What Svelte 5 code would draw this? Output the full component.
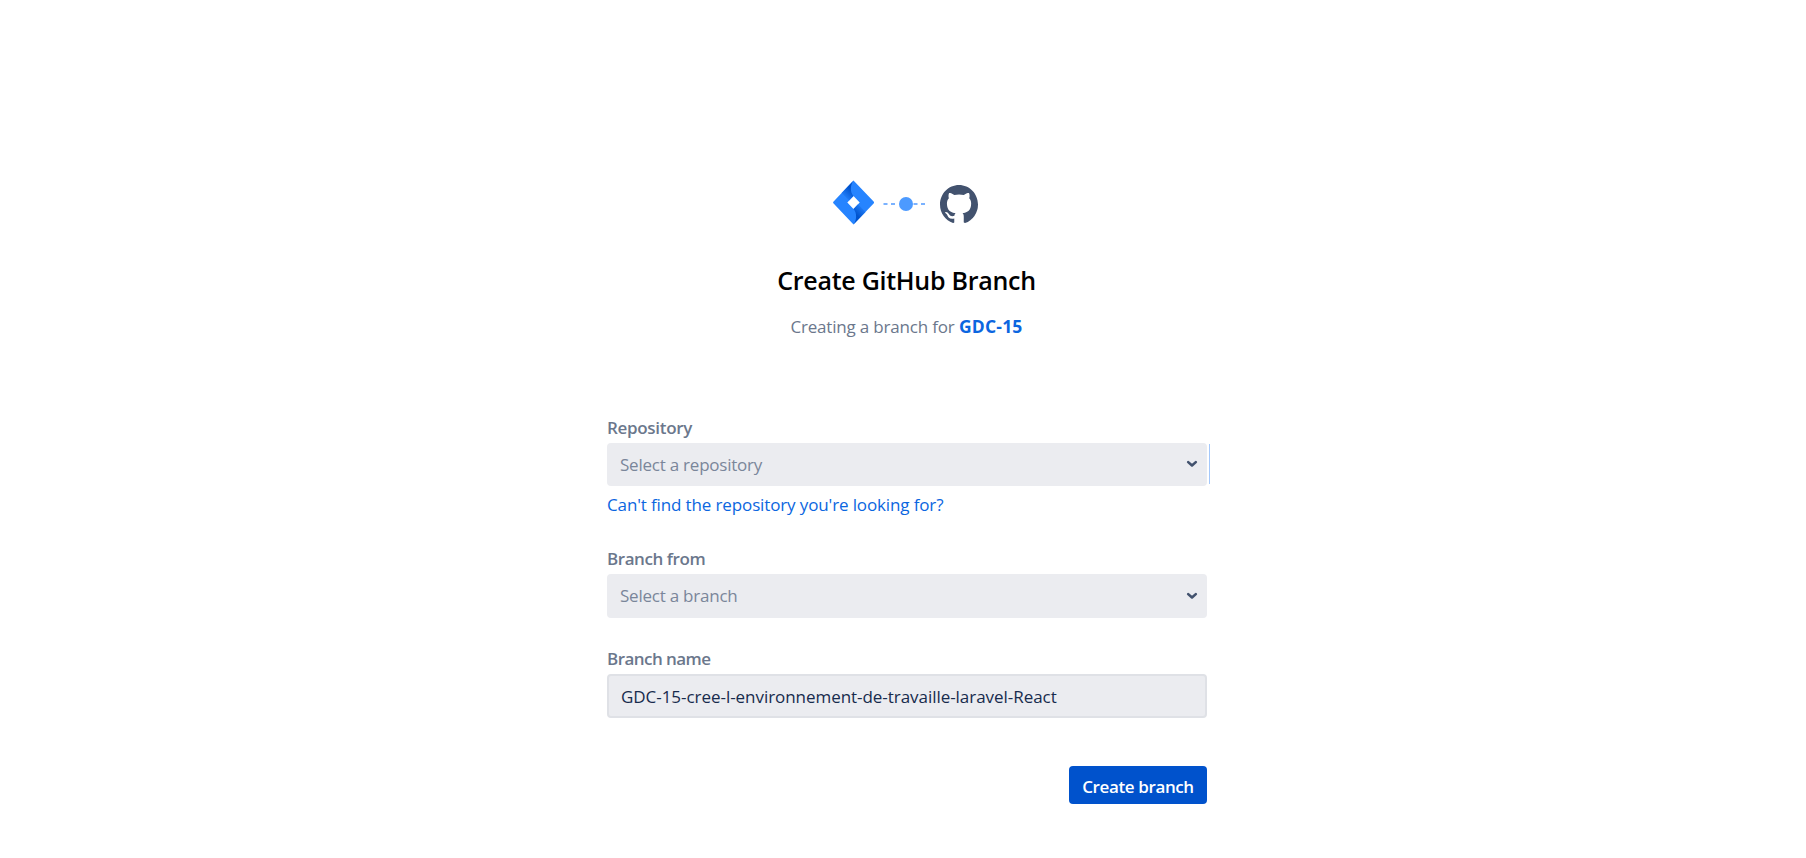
<script>
  let branchName = $state('GDC-15-cree-l-environnement-de-travaille-laravel-React');
</script>

{#snippet chevron()}
  <svg class="chevron" width="12" height="8" viewBox="0 0 12 8" aria-hidden="true">
    <path d="M2.2 2.1 6 5.5 9.8 2.1" fill="none" stroke="#42526e" stroke-width="2.6" stroke-linecap="round" stroke-linejoin="round" />
  </svg>
{/snippet}

<main>
  <header>
    <div class="logos">
      <svg width="42" height="45" viewBox="0 0 42 44" preserveAspectRatio="none" aria-hidden="true">
        <defs>
          <linearGradient id="upper" gradientUnits="userSpaceOnUse" x1="19" y1="10" x2="11" y2="18">
            <stop offset="0" stop-color="#0052cc" />
            <stop offset="1" stop-color="#2684ff" />
          </linearGradient>
          <linearGradient id="lower" gradientUnits="userSpaceOnUse" x1="23" y1="34" x2="31" y2="26">
            <stop offset="0" stop-color="#0052cc" />
            <stop offset="1" stop-color="#2684ff" />
          </linearGradient>
        </defs>
        <path fill="#2684ff" fill-rule="evenodd" d="M20.5.4 40.6 20.9a1.4 1.4 0 0 1 0 2L20.5 43.6.6 22.9a1.4 1.4 0 0 1 0-2ZM20.5 15.6 14.3 22l6.2 6.4 6.2-6.4Z" />
        <path fill="url(#upper)" d="M20.5 15.6C17 12 17 5 20.5.4L8.6 12.7 16.1 20.1Z" />
        <path fill="url(#lower)" d="M20.5 28.4C24 32 24 39 20.5 43.6L32.5 31.2 25 23.8Z" />
      </svg>
      <svg width="42" height="14" viewBox="0 0 42 14" class="link-line" aria-hidden="true">
        <path d="M.5 7h4M8 7h4M30.5 7h4M38 7h4" stroke="#7ab2ff" stroke-width="2" />
        <circle cx="23" cy="7" r="7" fill="#4c9aff" />
      </svg>
      <svg width="38" height="39" viewBox="0 0 16 16" preserveAspectRatio="none" class="github" aria-hidden="true">
        <path fill="#42526e" d="M8 0C3.58 0 0 3.58 0 8c0 3.54 2.29 6.53 5.47 7.59.4.07.55-.17.55-.38 0-.19-.01-.82-.01-1.49-2.01.37-2.53-.49-2.69-.94-.09-.23-.48-.94-.82-1.13-.28-.15-.68-.52-.01-.53.63-.01 1.08.58 1.23.82.72 1.21 1.87.87 2.33.66.07-.52.28-.87.51-1.07-1.78-.2-3.64-.89-3.64-3.95 0-.87.31-1.59.82-2.15-.08-.2-.36-1.02.08-2.12 0 0 .67-.21 2.2.82.64-.18 1.32-.27 2-.27s1.36.09 2 .27c1.53-1.04 2.2-.82 2.2-.82.44 1.1.16 1.92.08 2.12.51.56.82 1.27.82 2.15 0 3.07-1.87 3.75-3.65 3.95.29.25.54.73.54 1.48 0 1.07-.01 1.93-.01 2.2 0 .21.15.46.55.38A8.01 8.01 0 0 0 16 8c0-4.42-3.58-8-8-8Z" />
      </svg>
    </div>
    <h1>Create GitHub Branch</h1>
    <p class="subtitle"><span>Creating a branch for</span> <a href="#issue">GDC-15</a></p>
  </header>

  <form onsubmit={(e) => e.preventDefault()}>
    <div class="field">
      <div class="label repo-label">Repository</div>
      <div class="select repo">
        <span>Select a repository</span>
        {@render chevron()}
      </div>
      <a class="help" href="#help">Can't find the repository you're looking for?</a>
    </div>

    <div class="field from">
      <div class="label from-label">Branch from</div>
      <div class="select">
        <span>Select a branch</span>
        {@render chevron()}
      </div>
    </div>

    <div class="field name">
      <label class="label name-label" for="branch">Branch name</label>
      <input id="branch" bind:value={branchName} spellcheck="false" />
    </div>

    <div class="actions">
      <button type="submit">Create branch</button>
    </div>
  </form>
</main>

<style>
  :global(body) {
    background: #fff;
  }

  main {
    box-sizing: border-box;
    width: 600px;
    height: 858px;
    margin: 0 auto;
    padding: 180px 0 0;
    transform: translateX(4px);
    font: 400 17px/20px "Open Sans", "Noto Sans", sans-serif;
    color: #172b4d;
  }

  header {
    display: flex;
    flex-direction: column;
    align-items: center;
  }

  .logos {
    display: flex;
    align-items: flex-start;
    height: 44px;
    margin-right: 4px;
  }

  .logos svg {
    display: block;
  }

  .link-line {
    margin: 17px 15px 0 8px;
  }

  .github {
    margin-top: 5px;
  }

  h1 {
    margin: 41px 1px 0 0;
    font-size: 25px;
    line-height: 30px;
    font-weight: 600;
    letter-spacing: -0.27px;
    color: #000;
  }

  .subtitle {
    height: 20px;
    margin: 21px 1px 0 0;
    color: #6b778c;
    white-space: nowrap;
  }

  .subtitle span {
    letter-spacing: -0.19px;
  }

  .subtitle a {
    font-size: 17.5px;
    font-weight: 700;
    letter-spacing: 0.2px;
  }

  a {
    color: #0b66e0;
    text-decoration: none;
  }

  form {
    margin-top: 81px;
  }

  .field {
    display: flex;
    flex-direction: column;
  }

  .from {
    margin-top: 33px;
  }

  .name {
    margin-top: 30px;
  }

  .label {
    padding-top: 1px;
    margin-bottom: 5px;
    font-weight: 600;
    color: #6b778c;
  }

  .repo-label {
    letter-spacing: -0.31px;
  }

  .from-label {
    letter-spacing: -0.43px;
  }

  .name-label {
    letter-spacing: -0.55px;
  }

  .select {
    position: relative;
    display: flex;
    align-items: center;
    justify-content: space-between;
    box-sizing: border-box;
    height: 44px;
    padding: 0 9px 0 13px;
    border-radius: 4px;
    background: #ebecf0;
    color: #7a869a;
    letter-spacing: -0.23px;
  }

  .repo {
    height: 43px;
  }

  .repo::after {
    content: "";
    position: absolute;
    top: 1px;
    bottom: 2px;
    right: -3px;
    width: 1px;
    background: #a4c8fb;
  }

  .chevron {
    display: block;
    margin-top: -1px;
  }

  .help {
    margin-top: 9px;
    letter-spacing: -0.13px;
  }

  input {
    box-sizing: border-box;
    width: 100%;
    height: 44px;
    margin: 0;
    padding: 0 12px;
    border: 2px solid #dfe1e6;
    border-radius: 4px;
    outline: none;
    background: #ebecf0;
    font: inherit;
    letter-spacing: -0.045px;
    color: #172b4d;
  }

  .actions {
    display: flex;
    justify-content: flex-end;
    margin-top: 48px;
  }

  button {
    box-sizing: border-box;
    width: 138px;
    height: 38px;
    padding: 3px 0 0;
    border: 0;
    border-radius: 4px;
    background: #0052cc;
    font: inherit;
    font-weight: 600;
    letter-spacing: -0.38px;
    color: #fff;
  }
</style>
